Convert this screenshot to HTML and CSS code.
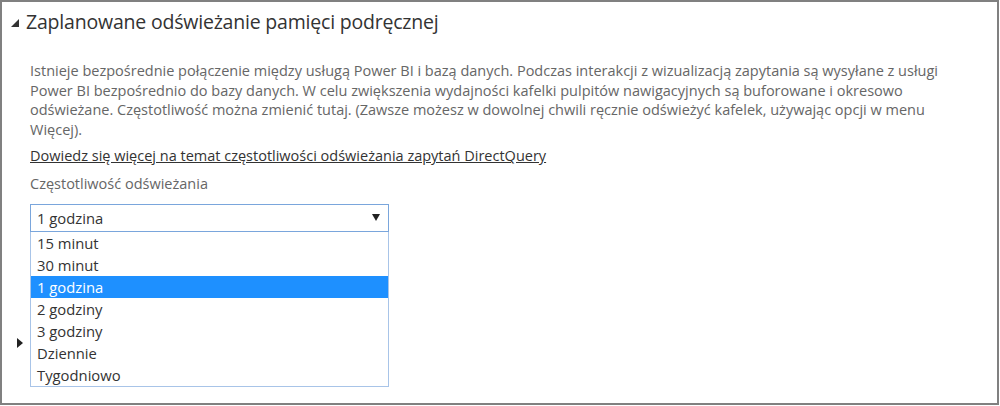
FILE: index.html
```html
<!DOCTYPE html>
<html lang="pl">
<head>
<meta charset="utf-8">
<link rel="stylesheet" href="styles.css">
</head>
<body>
<div class="frame">
  <section class="section">
    <h2 class="section-title">
      <svg class="twisty-open" width="8" height="8" viewBox="0 0 8 8"><polygon points="8,0 8,8 0,8" fill="#333"/></svg>
      <span>Zaplanowane odświeżanie pamięci podręcznej</span>
    </h2>
    <div class="section-body">
      <p class="desc">Istnieje bezpośrednie połączenie między usługą Power BI i bazą danych. Podczas interakcji z wizualizacją zapytania są wysyłane z usługi<br>Power BI bezpośrednio do bazy danych. W celu zwiększenia wydajności kafelki pulpitów nawigacyjnych są buforowane i okresowo<br>odświeżane. Częstotliwość można zmienić tutaj. (Zawsze możesz w dowolnej chwili ręcznie odświeżyć kafelek, używając opcji w menu<br>Więcej).</p>
      <a class="learn" href="#">Dowiedz się więcej na temat częstotliwości odświeżania zapytań DirectQuery</a>
      <div class="field-label">Częstotliwość odświeżania</div>
      <div class="select-wrap">
        <div class="select">
          <span>1 godzina</span>
          <svg class="caret" width="8" height="7" viewBox="0 0 8 7"><polygon points="0,0 8,0 4,7" fill="#222"/></svg>
        </div>
        <ul class="options">
          <li>15 minut</li>
          <li>30 minut</li>
          <li class="selected">1 godzina</li>
          <li>2 godziny</li>
          <li>3 godziny</li>
          <li>Dziennie</li>
          <li>Tygodniowo</li>
        </ul>
      </div>
    </div>
  </section>
  <section class="section collapsed">
    <svg class="twisty-closed" width="6" height="10" viewBox="0 0 6 10"><polygon points="0,0 6,5 0,10" fill="#222"/></svg>
  </section>
</div>
</body>
</html>
```
FILE: styles.css
```css
html, body {
  margin: 0;
  padding: 0;
  background: #ffffff;
}
body {
  font-family: "Open Sans", "Noto Sans", sans-serif;
  color: #333;
}
.frame {
  box-sizing: border-box;
  width: 999px;
  height: 405px;
  border: 2px solid #808080;
  background: #fff;
  overflow: hidden;
}
.section-title {
  margin: 0;
  padding: 8px 0 0 9px;
  display: flex;
  align-items: center;
  gap: 7px;
  font-size: 19.5px;
  font-weight: 400;
  color: #333;
  line-height: 24px;
  letter-spacing: -0.2px;
}
.twisty-open {
  display: block;
  margin-top: 1px;
}
.section-body {
  padding: 27px 0 0 28px;
}
.desc {
  margin: 0;
  width: 960px;
  font-size: 14.5px;
  line-height: 19.6px;
  color: #666;
}
.learn {
  display: block;
  margin-top: 7px;
  font-size: 14.5px;
  line-height: 19.6px;
  color: #333;
  text-decoration: underline;
}
.field-label {
  margin-top: 8.5px;
  font-size: 14.5px;
  line-height: 19.6px;
  color: #666;
}
.select-wrap {
  position: relative;
  margin-top: 10px;
  width: 359px;
}
.select {
  box-sizing: border-box;
  height: 28px;
  border: 1px solid #7aa6dc;
  display: flex;
  align-items: center;
  justify-content: space-between;
  padding: 0 8px 0 6px;
  font-size: 14.8px;
  color: #333;
}
.caret {
  display: block;
  margin-top: -2px;
}
.options {
  position: absolute;
  left: 0;
  top: 28px;
  z-index: 2;
  box-sizing: border-box;
  width: 359px;
  margin: 0;
  padding: 0;
  list-style: none;
  background: #fff;
  border: 1px solid #a8c4e8;
  border-top: none;
  font-size: 14.8px;
  color: #333;
}
.options li {
  height: 22px;
  line-height: 22px;
  padding-left: 6px;
}
.options li.selected {
  background: #1e90ff;
  color: #fff;
}
.collapsed {
  padding: 106px 0 0 15px;
}
.twisty-closed {
  display: block;
}
```
